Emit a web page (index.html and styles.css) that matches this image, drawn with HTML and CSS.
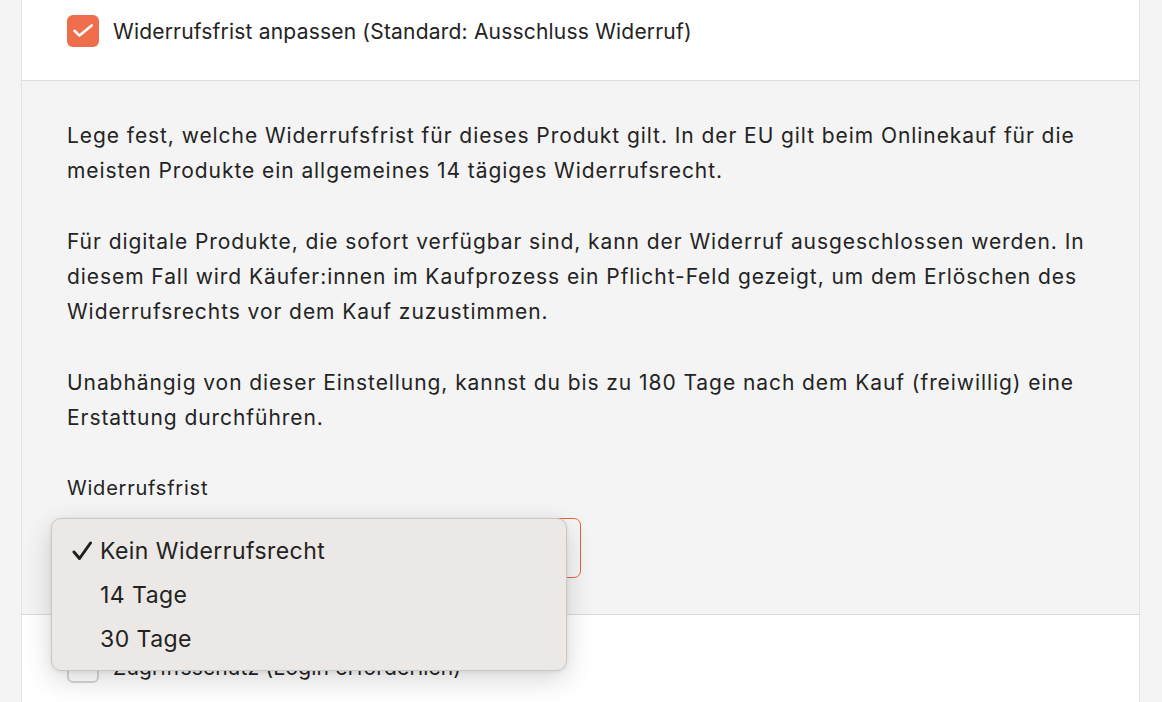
FILE: index.html
```html
<!DOCTYPE html>
<html lang="de">
<head>
<meta charset="utf-8">
<link rel="stylesheet" href="styles.css">
</head>
<body>
<div class="card">
  <div class="section top">
    <label class="check-row">
      <span class="box checked">
        <svg viewBox="0 0 32 32" width="32" height="32"><path d="M7.5 15.8l5 4.8 12.2-10.2" fill="none" stroke="#fff" stroke-width="2.6" stroke-linecap="round" stroke-linejoin="round"/></svg>
      </span>
      <span class="check-label">Widerrufsfrist anpassen (Standard: Ausschluss Widerruf)</span>
    </label>
  </div>
  <div class="section gray">
    <p>Lege fest, welche Widerrufsfrist für dieses Produkt gilt. In der EU gilt beim Onlinekauf für die meisten Produkte ein allgemeines 14 tägiges Widerrufsrecht.</p>
    <p>Für digitale Produkte, die sofort verfügbar sind, kann der Widerruf ausgeschlossen werden. In diesem Fall wird Käufer:innen im Kaufprozess ein Pflicht-Feld gezeigt, um dem Erlöschen des Widerrufsrechts vor dem Kauf zuzustimmen.</p>
    <p>Unabhängig von dieser Einstellung, kannst du bis zu 180 Tage nach dem Kauf (freiwillig) eine Erstattung durchführen.</p>
    <div class="field">
      <div class="field-label">Widerrufsfrist</div>
      <div class="select-wrap">
        <div class="select">
          <svg class="chev" viewBox="0 0 12 20" width="12" height="20"><path d="M2 7l4-4 4 4M2 13l4 4 4-4" fill="none" stroke="#555" stroke-width="1.6" stroke-linecap="round" stroke-linejoin="round"/></svg>
        </div>
        <div class="menu">
          <div class="item selected">
            <svg class="tick" viewBox="0 0 20 20" width="20" height="20"><path d="M2 11l5.5 6.5L18.5 2" fill="none" stroke="#1f1f1f" stroke-width="3" stroke-linecap="round" stroke-linejoin="round"/></svg>
            <span>Kein Widerrufsrecht</span>
          </div>
          <div class="item"><span>14 Tage</span></div>
          <div class="item"><span>30 Tage</span></div>
        </div>
      </div>
    </div>
  </div>
  <div class="section bottom">
    <label class="check-row">
      <span class="box"></span>
      <span class="check-label">Zugriffsschutz (Login erforderlich)</span>
    </label>
  </div>
</div>
</body>
</html>
```

FILE: styles.css
```css
html, body {
  margin: 0;
  padding: 0;
  background: #f4f4f4;
  height: 702px;
  overflow: hidden;
}
body {
  font-family: "Inter", "Noto Sans", sans-serif;
  color: #232323;
}
.card {
  margin-left: 21px;
  width: 1117px;
  background: #fff;
  border-left: 1px solid #e2e2e2;
  border-right: 1px solid #e2e2e2;
  height: 702px;
  overflow: hidden;
}
.section {
  padding-left: 45px;
  padding-right: 45px;
}
.top {
  box-sizing: border-box;
  height: 81px;
  padding-top: 15px;
  border-bottom: 1px solid #dcdcdc;
}
.check-row {
  display: flex;
  align-items: center;
  gap: 14px;
}
.box {
  width: 32px;
  height: 32px;
  border-radius: 6px;
  box-sizing: border-box;
  border: 2px solid #d6d6d6;
  background: #fff;
  display: flex;
  flex: none;
}
.box.checked {
  background: #ee6d4a;
  border: none;
}
.check-label {
  font-size: 21px;
  letter-spacing: 0.2px;
}
.gray {
  background: #f4f4f4;
  border-bottom: 1px solid #d8d8d8;
  padding-top: 37px;
  padding-bottom: 36px;
}
.gray p {
  margin: 0 0 36px 0;
  font-size: 21px;
  line-height: 35px;
  letter-spacing: 0.93px;
}
.field {
  padding-top: 4px;
}
.field-label {
  font-size: 20px;
  line-height: 26px;
  letter-spacing: 0.78px;
  margin-bottom: 17px;
}
.select-wrap {
  position: relative;
  width: 514px;
}
.select {
  height: 60px;
  box-sizing: border-box;
  border: 1px solid #e9633f;
  border-radius: 7px;
  background: #f6f6f6;
  padding: 0 12px;
  display: flex;
  align-items: center;
  justify-content: flex-end;
}
.menu {
  position: absolute;
  left: -16px;
  top: 0;
  width: 516px;
  height: 153px;
  box-sizing: border-box;
  background: #ebe8e5;
  border: 1px solid #c9c7c5;
  border-radius: 10px;
  box-shadow: 0 8px 28px rgba(0, 0, 0, 0.16), 0 1px 4px rgba(0, 0, 0, 0.08);
  padding-top: 10px;
  z-index: 5;
}
.item {
  height: 44px;
  display: flex;
  align-items: center;
  padding-left: 48px;
  position: relative;
  font-size: 23px;
  letter-spacing: 0.45px;
  color: #222;
}
.tick {
  position: absolute;
  left: 20px;
  top: 12px;
}
.bottom {
  padding-top: 36px;
}
```
